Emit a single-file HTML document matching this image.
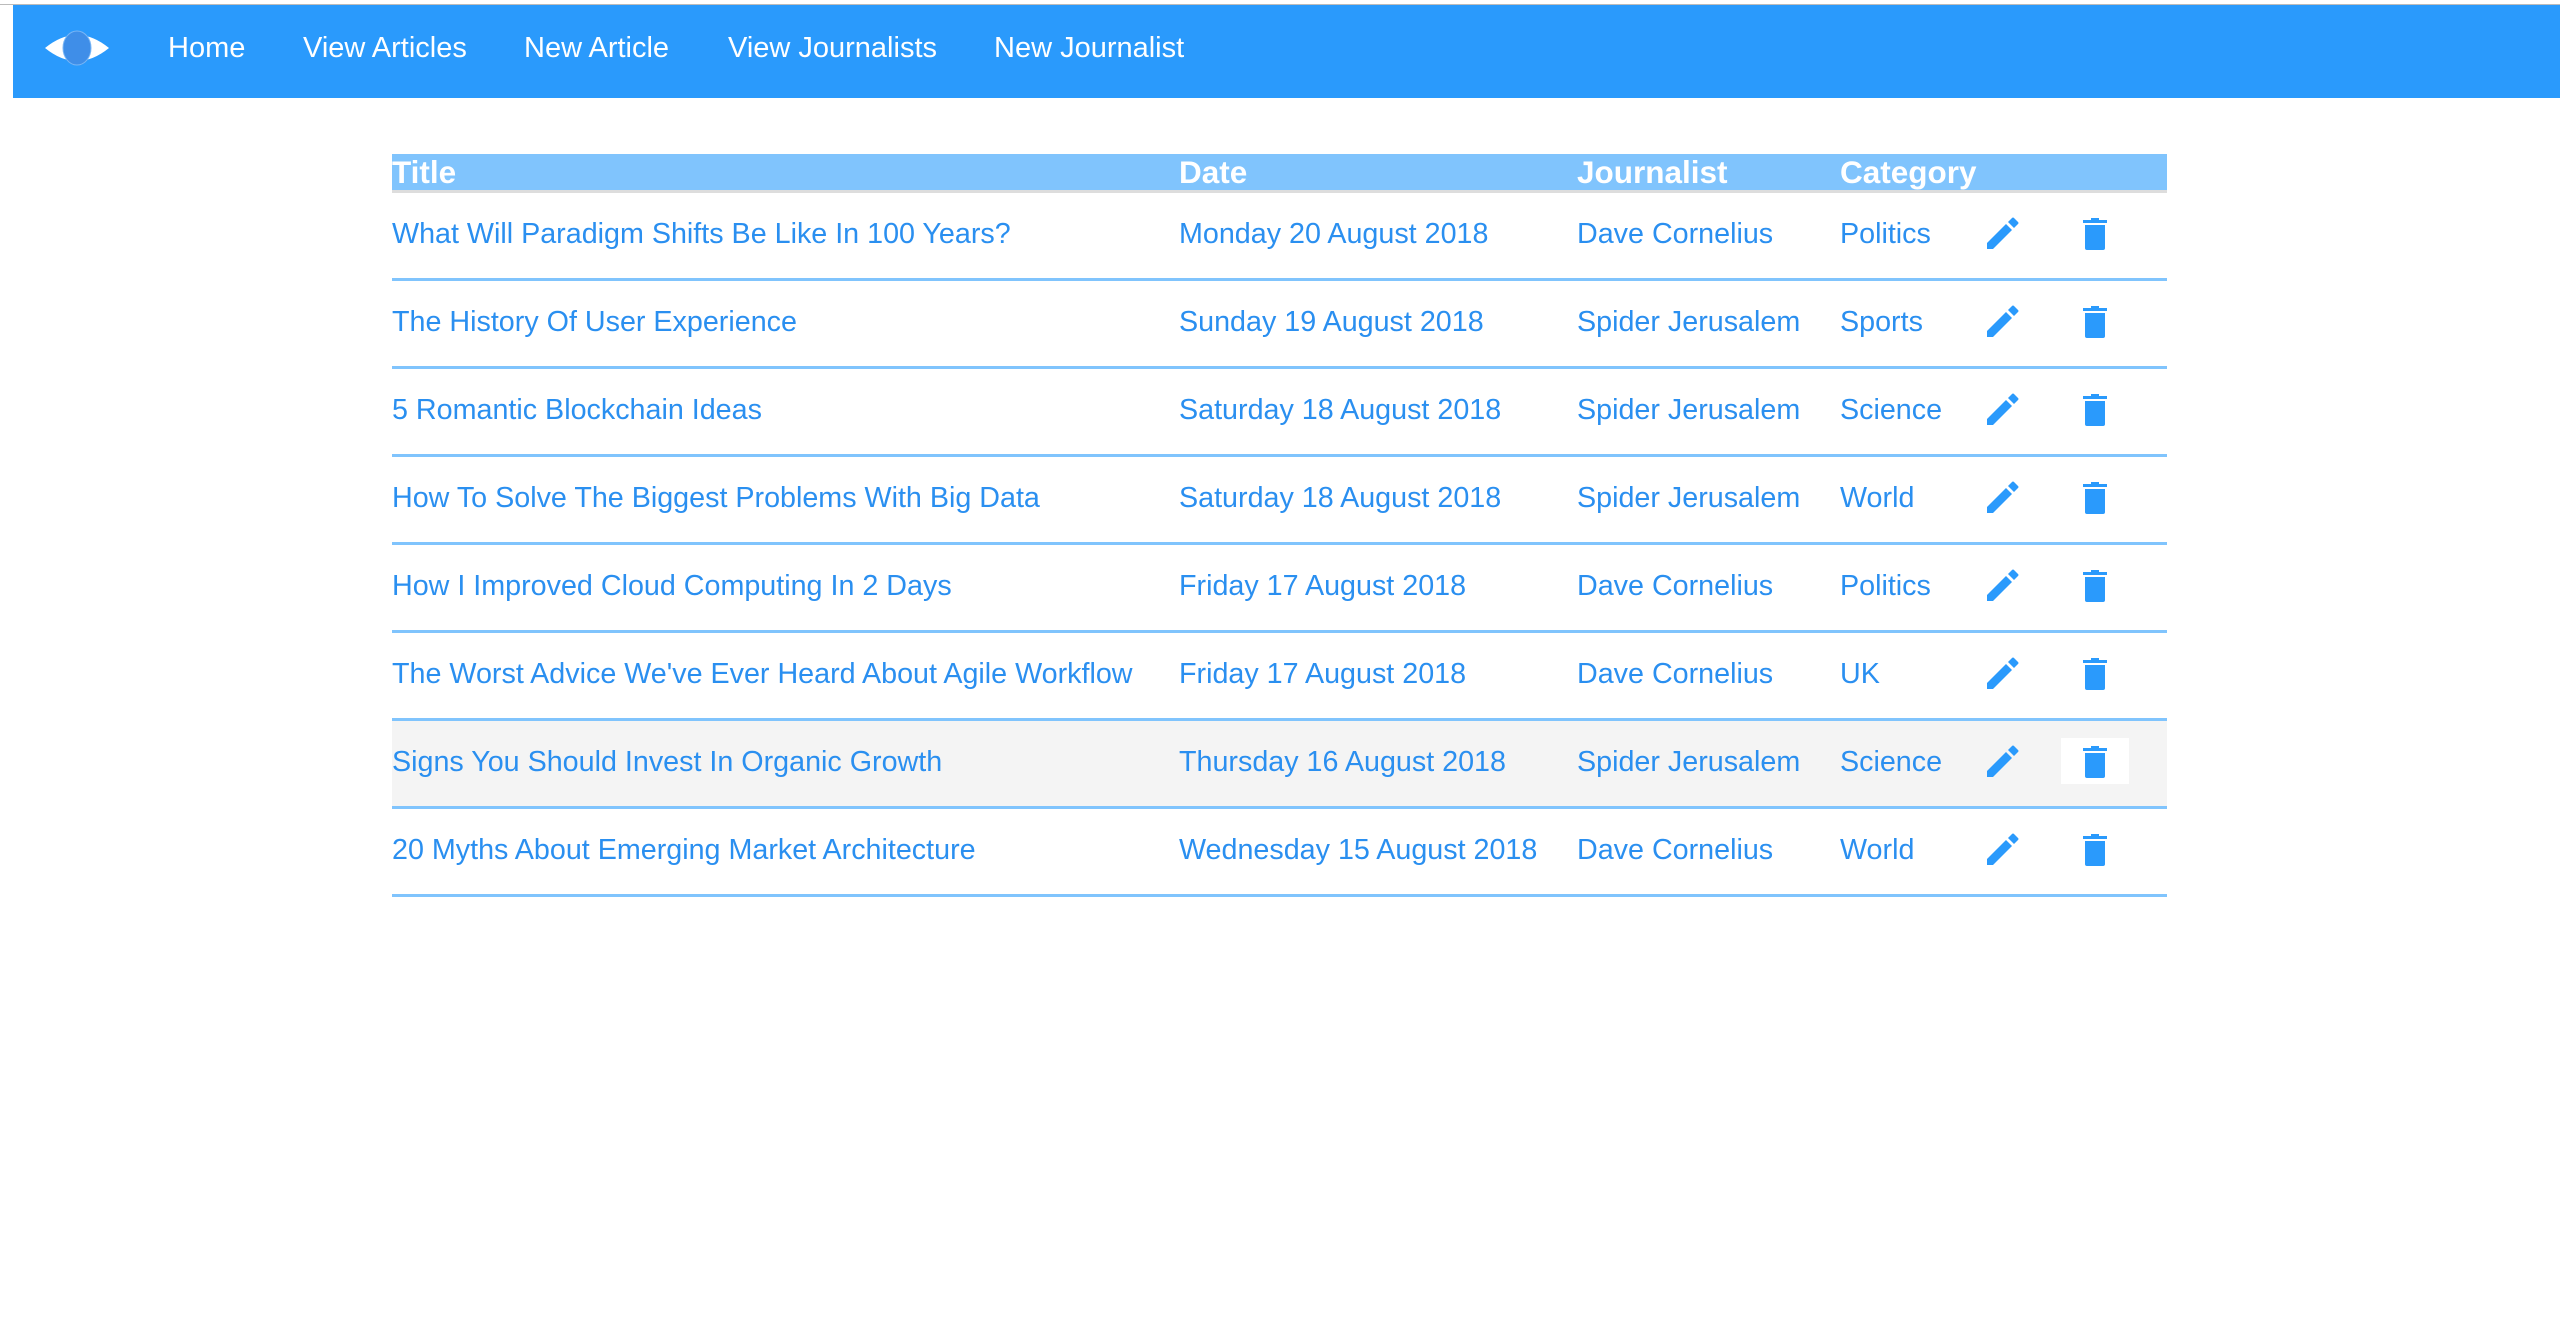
<!DOCTYPE html>
<html><head><meta charset="utf-8"><style>
html,body{margin:0;padding:0;width:2560px;height:1340px;background:#fff;overflow:hidden;font-family:"Liberation Sans",Arial,sans-serif}
.top{position:absolute;left:0;top:4px;width:2560px;height:1px;background:#bbb}
nav{position:absolute;left:13px;top:5px;width:2547px;height:93px;background:#2a9afc}
nav a{position:absolute;top:26px;color:#fff;font-size:29px;text-decoration:none;line-height:34px}
table{position:absolute;left:392px;top:154px;width:1775px;border-collapse:collapse}
th{background:#80c4fd;color:#fff;font-size:31.5px;font-weight:bold;text-align:left;height:36px;padding:0;line-height:36px;border-bottom:3px solid #ddd}
td{height:85px;padding:0;line-height:30px;border-bottom:3px solid #80c4fd;color:#2a8ff0;font-size:28.7px;white-space:nowrap}
td span.t{position:relative;top:-2px}
tr.h td{background:#f4f4f4}
.c1{width:787px}.c2{width:398px}.c3{width:263px}.c4{width:146px}.c5{width:96px}
.tb{display:inline-block;width:68px;height:46px;margin-left:-21px;text-align:center;line-height:46px;position:relative;top:-3px}
.pn{position:relative;top:-3px}
tr.h .tb{background:#fff}
svg{vertical-align:middle}
</style></head><body>
<div class="top"></div>
<nav>
<svg style="position:absolute;left:30px;top:25px" width="68" height="36" viewBox="0 0 68 36"><path d="M2 18 Q34 -8 66 18 Q34 44 2 18Z" fill="#fff"/><ellipse cx="34" cy="18" rx="14" ry="17" fill="#3f8ee8"/><ellipse cx="34" cy="18" rx="14" ry="17" fill="none" stroke="#7ab6f5" stroke-width="1"/></svg>
<a style="left:155px">Home</a>
<a style="left:290px">View Articles</a>
<a style="left:511px">New Article</a>
<a style="left:715px">View Journalists</a>
<a style="left:981px">New Journalist</a>
</nav>
<table>
<tr><th class="c1">Title</th><th class="c2">Date</th><th class="c3">Journalist</th><th class="c4">Category</th><th class="c5"></th><th></th></tr>
<tr><td>What Will Paradigm Shifts Be Like In 100 Years?</td><td>Monday 20 August 2018</td><td>Dave Cornelius</td><td>Politics</td><td>P</td><td>T</td></tr>
<tr><td>The History Of User Experience</td><td>Sunday 19 August 2018</td><td>Spider Jerusalem</td><td>Sports</td><td>P</td><td>T</td></tr>
<tr><td>5 Romantic Blockchain Ideas</td><td>Saturday 18 August 2018</td><td>Spider Jerusalem</td><td>Science</td><td>P</td><td>T</td></tr>
<tr><td>How To Solve The Biggest Problems With Big Data</td><td>Saturday 18 August 2018</td><td>Spider Jerusalem</td><td>World</td><td>P</td><td>T</td></tr>
<tr><td>How I Improved Cloud Computing In 2 Days</td><td>Friday 17 August 2018</td><td>Dave Cornelius</td><td>Politics</td><td>P</td><td>T</td></tr>
<tr><td>The Worst Advice We've Ever Heard About Agile Workflow</td><td>Friday 17 August 2018</td><td>Dave Cornelius</td><td>UK</td><td>P</td><td>T</td></tr>
<tr class="h"><td>Signs You Should Invest In Organic Growth</td><td>Thursday 16 August 2018</td><td>Spider Jerusalem</td><td>Science</td><td>P</td><td>T</td></tr>
<tr><td>20 Myths About Emerging Market Architecture</td><td>Wednesday 15 August 2018</td><td>Dave Cornelius</td><td>World</td><td>P</td><td>T</td></tr>
</table>
<script>
var pen='<svg class="pn" width="34" height="34" viewBox="0 0 34 34"><path d="M1 33 L1 27 L20 8 L26 14 L7 33 Z" fill="#2a9afc"/><path d="M22 6 L26 2 Q27 1 28 2 L32 6 Q33 7 32 8 L28 12 Z" fill="#2a9afc"/></svg>';
var tr='<span class="tb"><svg width="26" height="34" viewBox="0 0 26 34"><path d="M9 1 H17 V3 H25 V6 H1 V3 H9 Z" fill="#2a9afc"/><path d="M3 8 H23 V31 Q23 33 21 33 H5 Q3 33 3 31 Z" fill="#2a9afc"/></svg></span>';
document.querySelectorAll('td').forEach(function(t){var x=t.textContent;if(x==='P')t.innerHTML=pen;else if(x==='T')t.innerHTML=tr;else t.innerHTML='<span class="t">'+x+'</span>';});
</script>
</body></html>
